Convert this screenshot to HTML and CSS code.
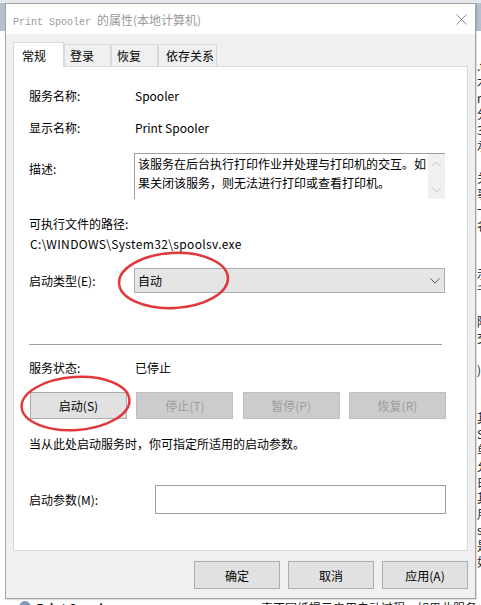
FILE: index.html
```html
<!DOCTYPE html>
<html lang="zh-CN">
<head>
<meta charset="utf-8">
<title>Print Spooler 的属性(本地计算机)</title>
<link rel="stylesheet" href="styles.css">
</head>
<body>
<div class="desktop">
  <div class="backdrop">
    <div class="bd-top"></div>
    <div class="bd-header"></div>
    <div class="bd-list">
      <div class="bd-left">
        <div class="bd-row">
          <span class="bd-icon"></span>
          <span class="bd-name">Print Spooler</span>
          <span class="bd-desc">表不同纸提示启用自动过程，如果此服务</span>
        </div>
      </div>
      <div class="bd-side">
        <div>.tb</div><div>木</div><div>r员</div><div>分</div><div>3</div><div>承</div><div>&nbsp;</div><div>关</div><div>事</div><div>十</div><div>名</div><div>&nbsp;</div><div>&nbsp;</div><div>示</div><div>千</div><div>&nbsp;</div><div>陆</div><div>交</div><div>&nbsp;</div><div>)</div><div>&nbsp;</div><div>卜</div><div>其</div><div>S</div><div>单</div><div>允</div><div>白</div><div>其</div><div>用</div><div>s</div><div>是</div><div>如</div>
      </div>
    </div>
  </div>

  <div class="dialog">
    <div class="titlebar">
      <span class="title"><span class="mono">Print Spooler </span>的属性(本地计算机)</span>
      <svg class="close" width="11" height="11" viewBox="0 0 11 11"><path d="M0.5 0.5L10.5 10.5M10.5 0.5L0.5 10.5" stroke="#8c8c8c" stroke-width="1" fill="none"/></svg>
    </div>
    <div class="content">
      <div class="tabs">
        <div class="tab active">常规</div>
        <div class="tab">登录</div>
        <div class="tab">恢复</div>
        <div class="tab wide">依存关系</div>
      </div>
      <div class="panel">
        <div class="row">
          <span class="lbl">服务名称:</span>
          <span class="val">Spooler</span>
        </div>
        <div class="row gap16">
          <span class="lbl">显示名称:</span>
          <span class="val">Print Spooler</span>
        </div>
        <div class="row top gap17">
          <span class="lbl desc-lbl">描述:</span>
          <div class="descbox">
            <div class="desc-text">
              <span class="line">该服务在后台执行打印作业并处理与打印机的交互。如</span>
              <span class="line">果关闭该服务，则无法进行打印或查看打印机。</span>
            </div>
            <div class="vscroll">
              <svg width="9" height="6" viewBox="0 0 9 6"><path d="M0.5 5L4.5 1L8.5 5" stroke="#c2c2c2" fill="none"/></svg>
              <svg width="9" height="6" viewBox="0 0 9 6"><path d="M0.5 1L4.5 5L8.5 1" stroke="#c2c2c2" fill="none"/></svg>
            </div>
          </div>
        </div>
        <div class="plain gap17">可执行文件的路径:</div>
        <div class="plain path gap4">C:\WINDOWS\System32\spoolsv.exe</div>
        <div class="row gap16">
          <span class="lbl">启动类型(E):</span>
          <div class="combo">
            <span>自动</span>
            <svg width="10" height="6" viewBox="0 0 10 6"><path d="M0.5 0.5L5 5L9.5 0.5" stroke="#5a5a5a" fill="none"/></svg>
          </div>
        </div>
        <div class="sep"></div>
        <div class="row gap15">
          <span class="lbl">服务状态:</span>
          <span class="val">已停止</span>
        </div>
        <div class="btnrow gap16">
          <div class="btn">启动(S)</div>
          <div class="btn disabled">停止(T)</div>
          <div class="btn disabled">暂停(P)</div>
          <div class="btn disabled">恢复(R)</div>
        </div>
        <div class="plain gap17">当从此处启动服务时，你可指定所适用的启动参数。</div>
        <div class="row gap33">
          <span class="lbl lbl-wide">启动参数(M):</span>
          <div class="input"></div>
        </div>
      </div>
      <div class="footer">
        <div class="btn fbtn">确定</div>
        <div class="btn fbtn">取消</div>
        <div class="btn fbtn">应用(A)</div>
      </div>
    </div>
  </div>

  <svg class="marks" width="481" height="605" viewBox="0 0 481 605">
    <ellipse cx="173.5" cy="280.5" rx="54.5" ry="27.5" transform="rotate(-3 173.5 280.5)" fill="none" stroke="#e0383b" stroke-width="2.5"/>
    <ellipse cx="75.5" cy="403.5" rx="54" ry="26.5" transform="rotate(-4 75.5 403.5)" fill="none" stroke="#e0383b" stroke-width="2.5"/>
  </svg>
</div>
</body>
</html>
```

FILE: styles.css
```css
* { box-sizing: border-box; }
html, body { margin: 0; padding: 0; }
body {
  width: 481px;
  height: 605px;
  overflow: hidden;
  font-family: "Noto Sans CJK SC", "Noto Sans", sans-serif;
  font-size: 12px;
  color: #000;
  background: #fff;
}
.desktop {
  position: relative;
  width: 481px;
  height: 605px;
  overflow: hidden;
  background: #fff;
}

/* background application */
.backdrop {
  position: absolute;
  inset: 0;
  display: flex;
  flex-direction: column;
}
.bd-top { height: 3px; background: #e4e8ec; }
.bd-header { height: 28px; background: #b4c0cd; }
.bd-list { flex: 1; display: flex; min-height: 0; }
.bd-left {
  width: 477px;
  flex: none;
  display: flex;
  flex-direction: column;
  justify-content: flex-end;
}
.bd-row {
  display: flex;
  align-items: center;
  height: 16px;
  margin-bottom: -10px;
  white-space: nowrap;
  color: #1a1a1a;
}
.bd-icon {
  width: 13px;
  height: 13px;
  margin-left: 19px;
  border-radius: 50%;
  background: #7f9ab5;
}
.bd-name { margin-left: 6px; width: 252px; font-weight: bold; }
.bd-side {
  flex: 1;
  overflow: hidden;
  padding-top: 27px;
  line-height: 16px;
  color: #222;
  white-space: nowrap;
}

/* dialog window */
.dialog {
  position: absolute;
  left: 5px;
  top: 3px;
  width: 471px;
  height: 596px;
  border: 1px solid #a3a3a3;
  background: #f0f0f0;
  display: flex;
  flex-direction: column;
  box-shadow: 1px 1px 1px rgba(0, 0, 0, 0.12);
}
.titlebar {
  height: 30px;
  flex: none;
  background: #fff;
  display: flex;
  align-items: center;
  justify-content: space-between;
  padding: 0 8px 0 7px;
}
.title { color: #9a9a9a; font-size: 12px; white-space: nowrap; }
.mono { font-family: "Liberation Mono", monospace; font-size: 10px; }
.close { display: block; }

.content {
  flex: 1;
  padding: 8px 7px 0 7px;
  display: flex;
  flex-direction: column;
}
.tabs {
  display: flex;
  align-items: flex-end;
  height: 24px;
  flex: none;
  position: relative;
  z-index: 1;
}
.tab {
  width: 47px;
  height: 22px;
  border: 1px solid #d9d9d9;
  border-bottom: none;
  background: #f0f0f0;
  padding-left: 5px;
  line-height: 21px;
  white-space: nowrap;
}
.tab.wide { width: 59px; padding-left: 7px; }
.tab.active {
  width: 51px;
  height: 25px;
  margin-bottom: -1px;
  background: #fff;
  padding: 2px 0 0 8px;
  line-height: 22px;
}

.panel {
  height: 485px;
  flex: none;
  background: #fff;
  border: 1px solid #d9d9d9;
  padding: 21px 21px 0 15px;
  display: flex;
  flex-direction: column;
}
.row { display: flex; align-items: center; line-height: 16px; }
.row.top { align-items: flex-start; }
.lbl { width: 105px; flex: none; white-space: nowrap; }
.lbl-wide { width: 126px; }
.desc-lbl { margin-top: 8px; }
.val { padding-left: 1px; }
.plain { line-height: 16px; white-space: nowrap; }
.path { padding-left: 1px; letter-spacing: 0.35px; }
.gap4 { margin-top: 4px; }
.gap15 { margin-top: 15px; }
.gap16 { margin-top: 16px; }
.gap17 { margin-top: 17px; }
.gap33 { margin-top: 33px; }

.descbox {
  width: 311px;
  height: 46px;
  border-top: 1px solid #a0a0a0;
  border-left: 1px solid #a0a0a0;
  display: flex;
}
.desc-text {
  flex: 1;
  padding: 0 0 0 3px;
  line-height: 19px;
  white-space: nowrap;
}
.desc-text .line { display: block; }
.vscroll {
  width: 17px;
  flex: none;
  background: #f0f0f0;
  display: flex;
  flex-direction: column;
  justify-content: space-between;
  align-items: center;
  padding: 7px 0 6px;
}
.vscroll svg { display: block; }

.combo {
  width: 311px;
  height: 25px;
  background: #e5e5e5;
  border: 1px solid #adadad;
  display: flex;
  align-items: center;
  justify-content: space-between;
  padding: 0 4px 0 3px;
}
.combo svg { display: block; }

.sep {
  margin-top: 51px;
  margin-right: 4px;
  height: 1px;
  background: #a0a0a0;
  flex: none;
}

.btnrow {
  display: flex;
  justify-content: space-between;
  padding-left: 1px;
}
.btn {
  height: 27px;
  width: 97px;
  background: #e1e1e1;
  border: 1px solid #adadad;
  display: flex;
  align-items: center;
  justify-content: center;
  white-space: nowrap;
}
.btn.disabled {
  background: #cccccc;
  border-color: #bfbfbf;
  color: #9d9d9d;
}

.input {
  width: 291px;
  height: 29px;
  border: 1px solid #a0a0a0;
  background: #fff;
}

.footer {
  display: flex;
  justify-content: flex-end;
  gap: 8px;
  margin-top: 10px;
}
.fbtn { width: 86px; height: 28px; }

.marks {
  position: absolute;
  left: 0;
  top: 0;
  pointer-events: none;
}
```
